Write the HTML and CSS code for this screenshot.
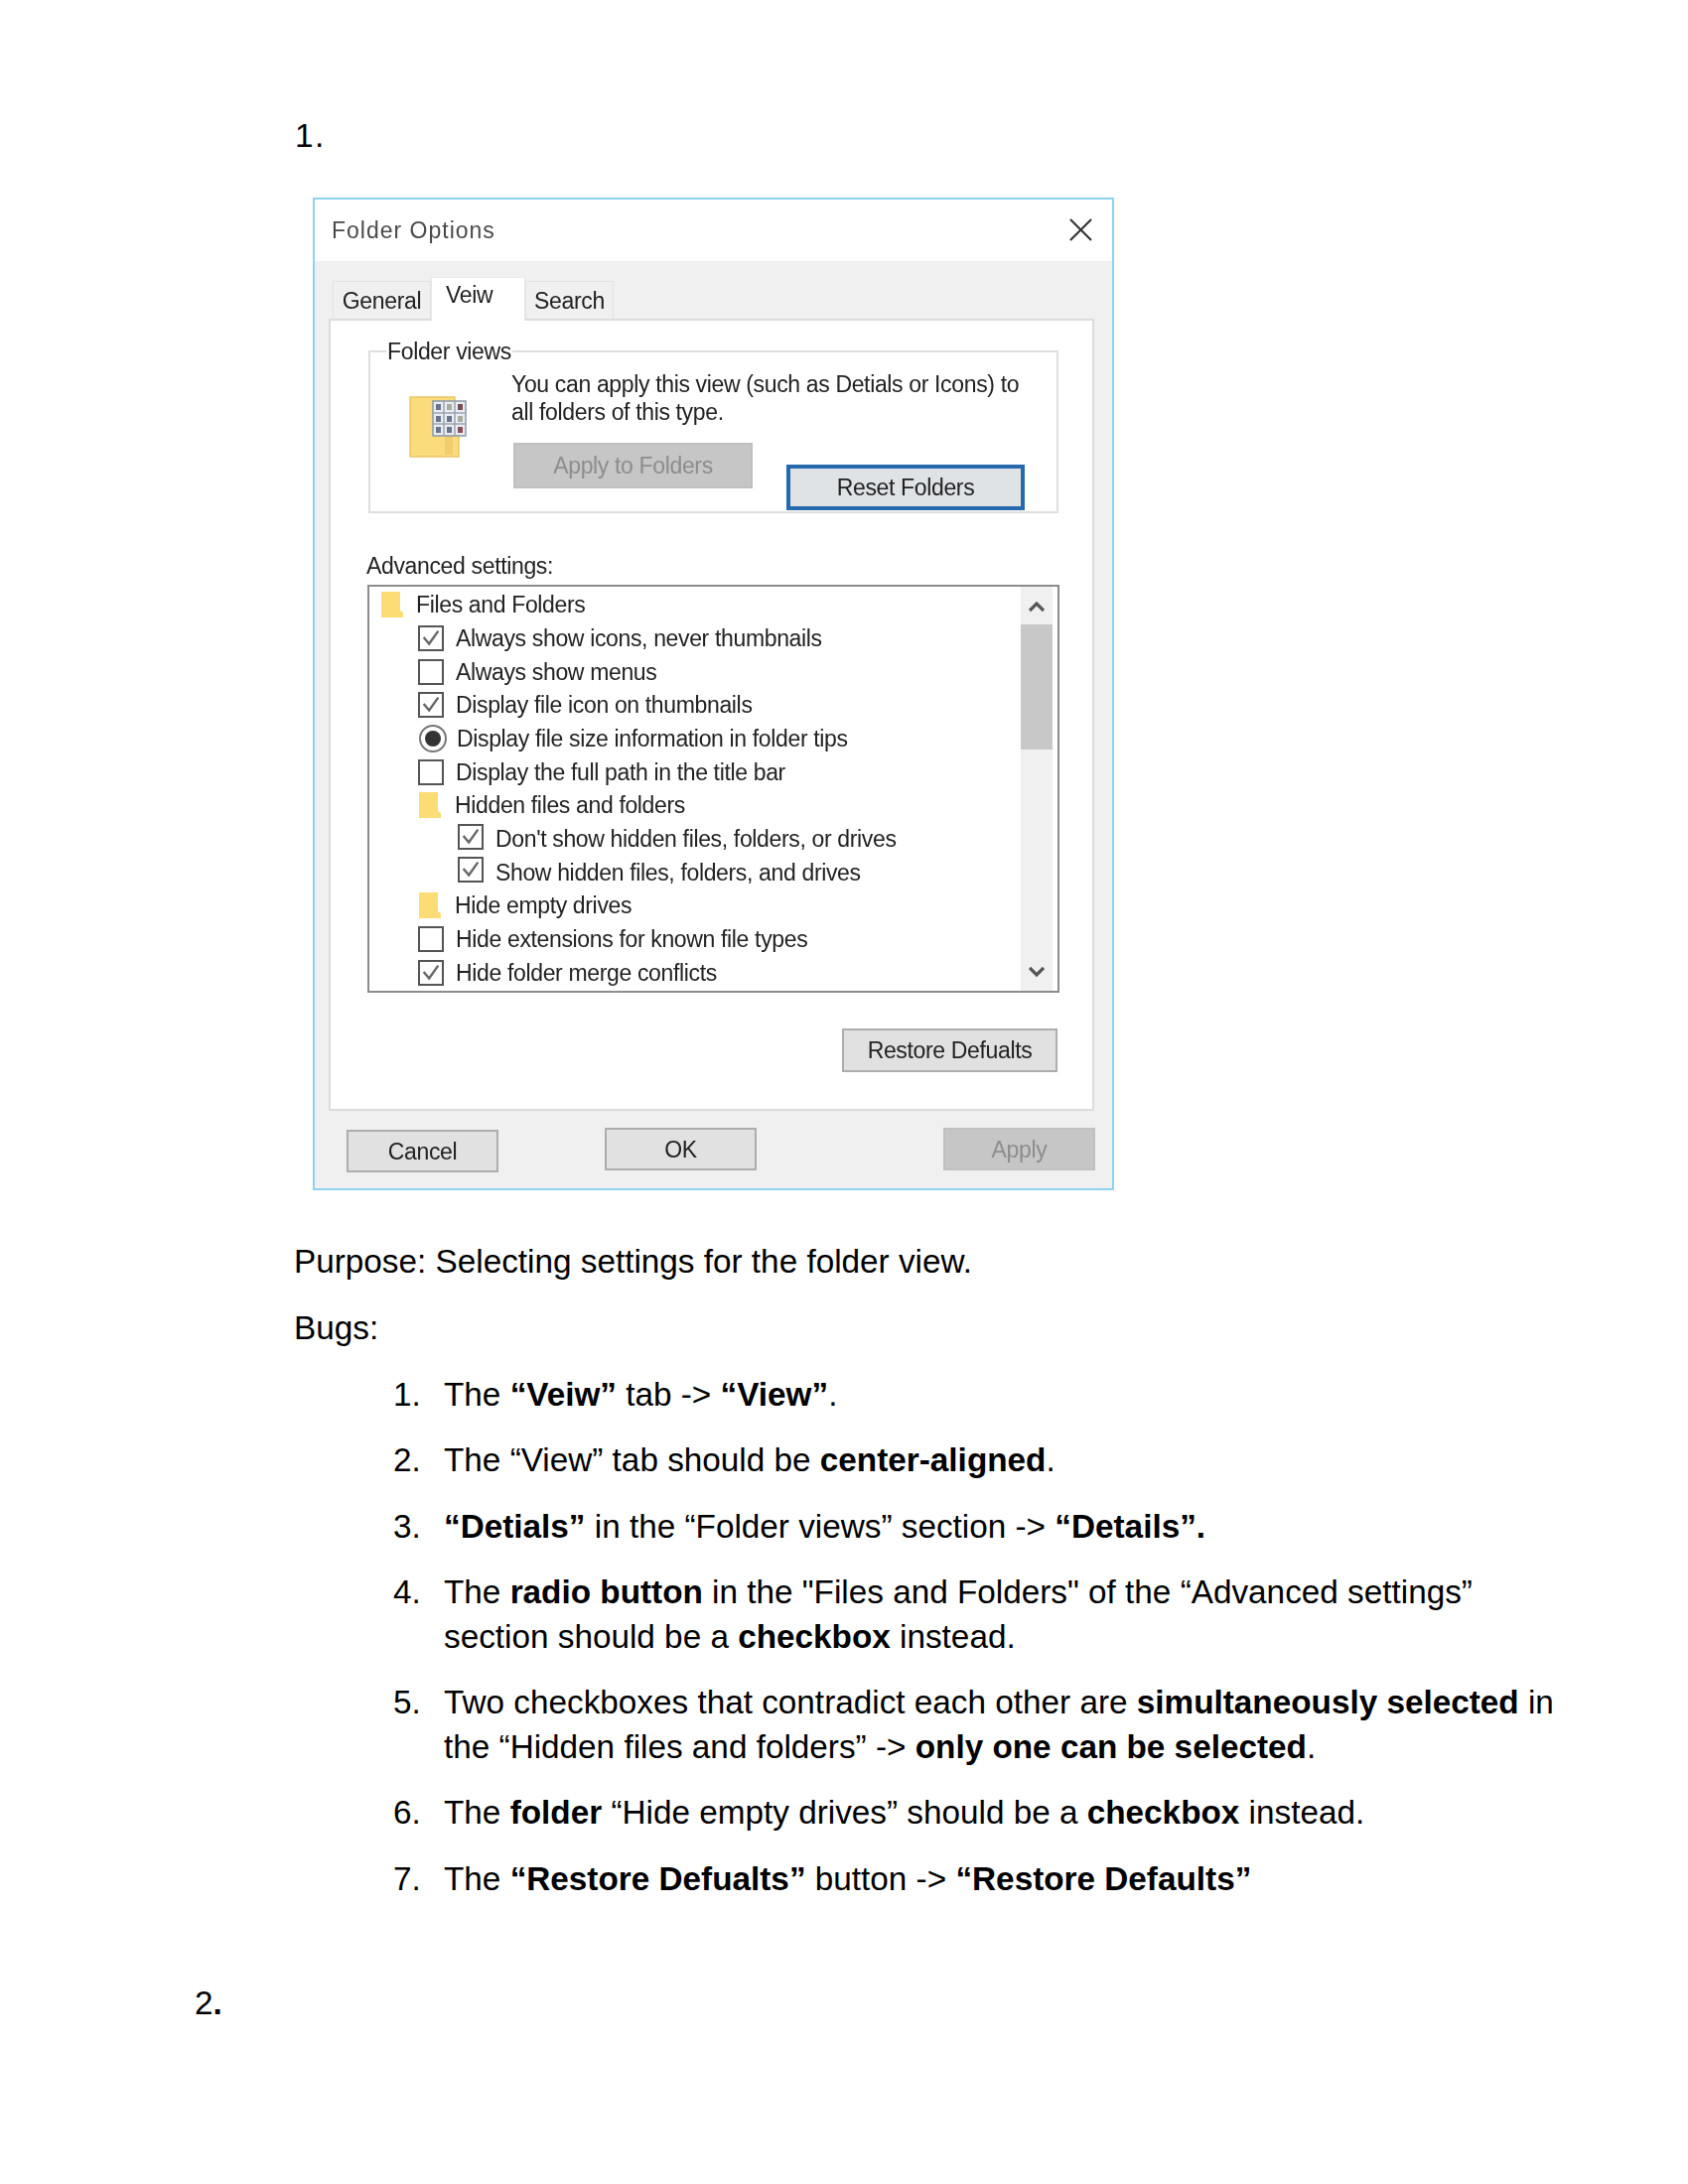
FILE: index.html
```html
<!DOCTYPE html>
<html lang="en">
<head>
<meta charset="utf-8">
<title>Folder Options bugs</title>
<link rel="stylesheet" href="styles.css">
</head>
<body>
<main class="page">
  <p class="step">1.</p>
  <section class="dialog">
    <header class="titlebar">
      <span class="title">Folder Options</span>
      <svg class="close" viewBox="0 0 24 24"><path d="M1 1L23 23M23 1L1 23"/></svg>
    </header>
    <div class="body">
      <div class="tabs">
        <span class="tab tab-general">General</span>
        <span class="tab tab-active">Veiw</span>
        <span class="tab tab-search">Search</span>
      </div>
      <div class="panel">
        <fieldset class="group">
          <legend class="legend">Folder views</legend>
          <div class="group-inner">
            <svg class="big-folder" viewBox="0 0 58 64">
              <path d="M1 2H46V12L50 14V62H1Z" fill="#fbdc7c" stroke="#eac565" stroke-width="1.5"/>
              <path d="M40 40V60" stroke="#f1cd6e" stroke-width="8"/>
              <rect x="24" y="6" width="33" height="35" fill="#e9edf2" stroke="#8d98a6" stroke-width="1.5"/>
              <path d="M35 6V41M46 6V41M24 18H57M24 29H57" stroke="#9aa5b2" stroke-width="1.5"/>
              <g fill="#68758c"><rect x="27" y="9" width="5" height="6"/><rect x="38" y="9" width="5" height="6" fill="#a7ad9a"/><rect x="49" y="9" width="5" height="6" fill="#7a4c54"/><rect x="27" y="21" width="5" height="6"/><rect x="38" y="21" width="5" height="6"/><rect x="49" y="21" width="5" height="6" fill="#a7ad9a"/><rect x="27" y="32" width="5" height="6"/><rect x="38" y="32" width="5" height="6"/><rect x="49" y="32" width="5" height="6" fill="#8a4c54"/></g>
            </svg>
            <div class="group-main">
              <p class="desc">You can apply this view (such as Detials or Icons) to<br>all folders of this type.</p>
              <div class="group-buttons">
                <span class="btn btn-disabled btn-apply-folders">Apply to Folders</span>
                <span class="btn btn-focus">Reset Folders</span>
              </div>
            </div>
          </div>
        </fieldset>
        <p class="adv-label">Advanced settings:</p>
        <div class="listbox">
          <ul class="tree">
            <li class="row"><svg class="folder" viewBox="0 0 24 28"><path d="M1 1H20V20L23 22V27H1Z"/></svg><span>Files and Folders</span></li>
            <li class="row l1"><span class="box"><svg viewBox="0 0 24 24"><path d="M4 11L10 18L20 4"/></svg></span><span>Always show icons, never thumbnails</span></li>
            <li class="row l1"><span class="box"></span><span>Always show menus</span></li>
            <li class="row l1"><span class="box"><svg viewBox="0 0 24 24"><path d="M4 11L10 18L20 4"/></svg></span><span>Display file icon on thumbnails</span></li>
            <li class="row l1"><span class="radio"><span class="dot"></span></span><span>Display file size information in folder tips</span></li>
            <li class="row l1"><span class="box"></span><span>Display the full path in the title bar</span></li>
            <li class="row l1"><svg class="folder" viewBox="0 0 24 28"><path d="M1 1H20V20L23 22V27H1Z"/></svg><span>Hidden files and folders</span></li>
            <li class="row l2"><span class="box box-up"><svg viewBox="0 0 24 24"><path d="M4 11L10 18L20 4"/></svg></span><span>Don't show hidden files, folders, or drives</span></li>
            <li class="row l2"><span class="box box-up"><svg viewBox="0 0 24 24"><path d="M4 11L10 18L20 4"/></svg></span><span>Show hidden files, folders, and drives</span></li>
            <li class="row l1"><svg class="folder" viewBox="0 0 24 28"><path d="M1 1H20V20L23 22V27H1Z"/></svg><span>Hide empty drives</span></li>
            <li class="row l1"><span class="box"></span><span>Hide extensions for known file types</span></li>
            <li class="row l1"><span class="box"><svg viewBox="0 0 24 24"><path d="M4 11L10 18L20 4"/></svg></span><span>Hide folder merge conflicts</span></li>
          </ul>
          <div class="scrollbar">
            <svg class="arrow" viewBox="0 0 16 12"><path d="M1 10L8 3L15 10"/></svg>
            <div class="thumb"></div>
            <svg class="arrow arrow-down" viewBox="0 0 16 12"><path d="M1 2L8 9L15 2"/></svg>
          </div>
        </div>
        <div class="restore-row"><span class="btn btn-restore">Restore Defualts</span></div>
      </div>
      <div class="footer">
        <span class="btn btn-foot btn-cancel">Cancel</span>
        <span class="btn btn-foot btn-ok">OK</span>
        <span class="btn btn-foot btn-disabled btn-apply">Apply</span>
      </div>
    </div>
  </section>
  <p class="para purpose">Purpose: Selecting settings for the folder view.</p>
  <p class="para">Bugs:</p>
  <ol class="bugs">
    <li class="bug"><span class="num">1.</span><span>The <b>“Veiw”</b> tab -&gt; <b>“View”</b>.</span></li>
    <li class="bug"><span class="num">2.</span><span>The “View” tab should be <b>center-aligned</b>.</span></li>
    <li class="bug"><span class="num">3.</span><span><b>“Detials”</b> in the “Folder views” section -&gt; <b>“Details”.</b></span></li>
    <li class="bug"><span class="num">4.</span><span>The <b>radio button</b> in the "Files and Folders" of the “Advanced settings”<br>section should be a <b>checkbox</b> instead.</span></li>
    <li class="bug"><span class="num">5.</span><span>Two checkboxes that contradict each other are <b>simultaneously selected</b> in<br>the “Hidden files and folders” -&gt; <b>only one can be selected</b>.</span></li>
    <li class="bug"><span class="num">6.</span><span>The <b>folder</b> “Hide empty drives” should be a <b>checkbox</b> instead.</span></li>
    <li class="bug"><span class="num">7.</span><span>The <b>“Restore Defualts”</b> button -&gt; <b>“Restore Defaults”</b></span></li>
  </ol>
  <p class="step-two">2<b>.</b></p>
</main>
</body>
</html>
```
FILE: styles.css
```css
html, body { margin: 0; padding: 0; background: #fff; }
.page {
  width: 1700px;
  height: 2200px;
  box-sizing: border-box;
  padding: 115px 0 0 196px;
  font-family: "Liberation Sans", Arial, sans-serif;
  font-size: 33.3px;
  line-height: 44.4px;
  color: #000;
  overflow: hidden;
}
p { margin: 0; }
.step { margin-left: 101px; letter-spacing: 1.5px; }
.dialog {
  width: 807px;
  height: 1000px;
  margin: 40px 0 0 119px;
  box-sizing: border-box;
  border: 2px solid #8ed3ee;
  background: #f0f0f0;
  display: flex;
  flex-direction: column;
  font-family: "Liberation Sans", Arial, sans-serif;
  font-size: 23px;
  line-height: 30px;
  letter-spacing: -0.35px;
  color: #222;
  filter: blur(0.5px);
}
.titlebar {
  height: 62px;
  flex: none;
  background: #fff;
  display: flex;
  align-items: center;
  justify-content: space-between;
  padding: 0 20px 0 17px;
}
.title { color: #4a4a4a; letter-spacing: 1px; }
.close { width: 23px; height: 23px; fill: none; stroke: #333; stroke-width: 2.2; margin-top: -2px; }
.body { flex: 1; display: flex; flex-direction: column; padding: 0 0 0 14px; }
.tabs { height: 58px; display: flex; align-items: flex-end; padding-left: 4px; }
.tab {
  box-sizing: border-box;
  height: 38px;
  display: flex;
  justify-content: center;
  align-items: center;
  border: 1px solid #e2e2e2;
  border-bottom: 0;
  background: #f0f0f0;
}
.tab-general { width: 99px; }
.tab-search { width: 89px; }
.tab-active {
  width: 95px;
  height: 44px;
  margin-bottom: -2px;
  background: #fff;
  border-color: #e8e8e8;
  position: relative;
  align-items: flex-start;
  justify-content: flex-start;
  padding: 2px 0 0 14px;
}
.panel {
  box-sizing: border-box;
  width: 771px;
  height: 798px;
  flex: none;
  background: #fff;
  border: 2px solid #dcdcdc;
  padding: 20px 33px 0 38px;
}
.group {
  margin: 0;
  padding: 0;
  width: 695px;
  height: 174px;
  box-sizing: border-box;
  border: 2px solid #dfdfdf;
  position: relative;
}
.legend {
  padding: 0 1px;
  margin-left: 16px;
  line-height: 22px;
  height: 22px;
}
.group-inner { display: flex; }
.big-folder { width: 58px; height: 64px; margin: 33px 0 0 39px; flex: none; }
.group-main { margin-left: 45px; }
.desc { line-height: 28px; padding-top: 8px; white-space: nowrap; }
.group-buttons { display: flex; margin-top: 17px; padding-left: 2px; }
.btn {
  box-sizing: border-box;
  display: flex;
  align-items: center;
  justify-content: center;
  background: #e1e1e1;
  border: 2px solid #adadad;
  white-space: nowrap;
  color: #222;
}
.btn-disabled { background: #c6c6c6; border-color: #c0c0c0; color: #8d8d8d; }
.btn-apply-folders { width: 241px; height: 46px; }
.btn-focus { width: 240px; height: 46px; margin: 22px 0 0 34px; border: 4px solid #2769ad; background: #dfe3e6; }
.adv-label { margin-top: 38px; line-height: 30px; margin-left: -2px; }
.listbox {
  box-sizing: border-box;
  width: 697px;
  height: 411px;
  margin: 4px 0 0 -1px;
  border: 2px solid #8c8c8c;
  display: flex;
  justify-content: space-between;
}
.tree { margin: 0; padding: 1px 0 0 0; list-style: none; flex: 1; }
.row { display: flex; align-items: center; height: 33.7px; white-space: nowrap; }
.l1 { padding-left: 49px; }
.l2 { padding-left: 89px; }
.row .folder { width: 24px; height: 28px; fill: #fcdc74; flex: none; margin: 0 12px 0 11px; }
.l1 .folder { margin: 0 13px 0 0; }
.box {
  box-sizing: border-box;
  width: 26px;
  height: 26px;
  flex: none;
  margin-right: 12px;
  border: 2px solid #555;
  background: #fff;
  display: block;
}
.box-up { margin-top: -5px; }
.box svg { display: block; width: 100%; height: 100%; fill: none; stroke: #666; stroke-width: 2.6; }
.radio {
  box-sizing: border-box;
  width: 28px;
  height: 28px;
  flex: none;
  margin: 0 10px 0 1px;
  border: 2px solid #777;
  border-radius: 50%;
  display: flex;
  align-items: center;
  justify-content: center;
}
.dot { width: 16px; height: 16px; border-radius: 50%; background: #333; }
.scrollbar {
  width: 32px;
  margin: 0 5px 0 0;
  background: #f0f0f0;
  display: flex;
  flex-direction: column;
  align-items: center;
}
.arrow { width: 16px; height: 12px; fill: none; stroke: #555; stroke-width: 3.2; flex: none; margin-top: 14px; }
.thumb { width: 100%; height: 126px; margin-top: 12px; background: #c8c8c8; flex: none; }
.arrow-down { margin-top: auto; margin-bottom: 13px; }
.restore-row { display: flex; justify-content: flex-end; margin: 36px 2px 0 0; }
.btn-restore { width: 217px; height: 44px; }
.footer { flex: 1; display: flex; padding-left: 18px; }
.btn-foot { width: 153px; height: 43px; flex: none; }
.btn-cancel { margin-top: 19px; }
.btn-ok { margin: 17px 0 0 107px; }
.btn-apply { margin: 17px 0 0 188px; }
.para { margin: 22.2px 0 0 100px; }
.purpose { margin-top: 50px; }
.bugs { margin: 22.2px 0 0 0; padding: 0 0 0 200px; list-style: none; }
.bug { display: flex; margin-bottom: 22.2px; }
.num { width: 51px; flex: none; }
.step-two { margin-top: 81px; }
```
